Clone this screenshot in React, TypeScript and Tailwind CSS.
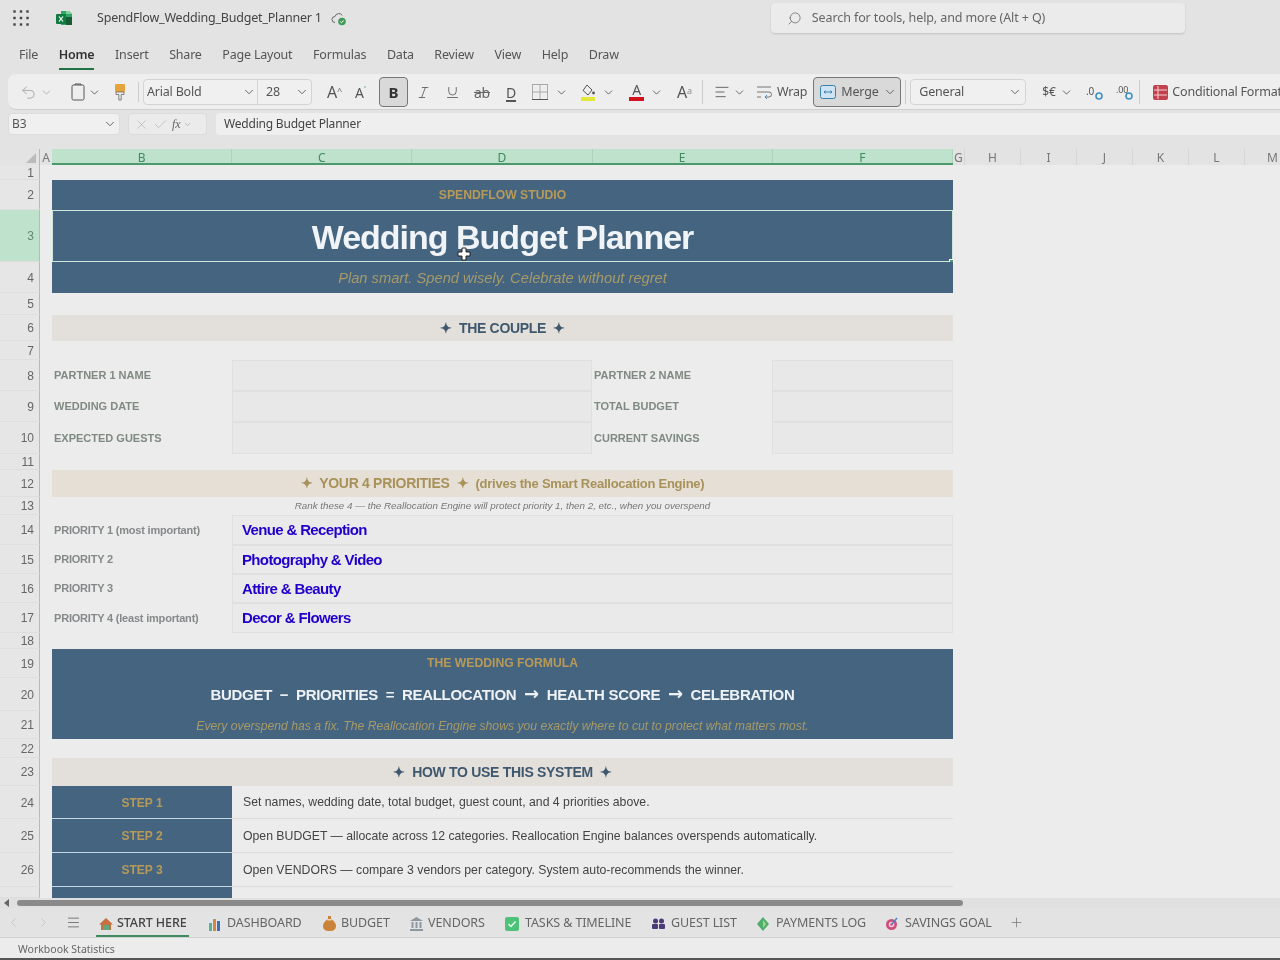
import type { ReactNode } from 'react'
import { ChevronDown, Undo2, Italic, Underline, Search, X, Check, ChevronLeft, ChevronRight, Menu, Plus, AlignLeft } from 'lucide-react'

const COLS = [
  { l: 'G', w: 12 }, { l: 'H', w: 56 }, { l: 'I', w: 56 }, { l: 'J', w: 56 }, { l: 'K', w: 56 }, { l: 'L', w: 56 }, { l: 'M', w: 56 },
]

function Chev({ className = 'ml-1' }: { className?: string }) {
  return <ChevronDown size={14} strokeWidth={1.5} className={`text-[#555] shrink-0 ${className}`} />
}

function ExcelLogo() {
  return (
    <svg width="20" height="20" viewBox="0 0 20 20">
      <path d="M7 3h8l3 3v11H7z" fill="#2fa866" />
      <path d="M12 3h3l3 3h-6z" fill="#7fd09c" />
      <rect x="12" y="9" width="6" height="8" fill="#185c37" />
      <rect x="2" y="6" width="10" height="10" rx="1" fill="#107c41" />
      <path d="M5 8.5l4 5M9 8.5l-4 5" stroke="#fff" strokeWidth="1.2" />
    </svg>
  )
}

function Waffle() {
  return (
    <svg width="16" height="16" viewBox="0 0 16 16" fill="#444">
      {[1.5, 8, 14.5].flatMap(y => [1.5, 8, 14.5].map(x => <rect key={`${x}${y}`} x={x - 1.2} y={y - 1.2} width="2.4" height="2.4" />))}
    </svg>
  )
}

function CloudOk() {
  return (
    <svg width="17" height="17" viewBox="0 0 17 17" fill="none">
      <path d="M4 12.5a3 3 0 0 1 0-6 4 4 0 0 1 7.3-1" stroke="#666" strokeWidth="1" />
      <circle cx="11" cy="11.5" r="3.8" fill="#3f9a5a" />
      <path d="M9.2 11.5l1.3 1.3 2.2-2.4" stroke="#fff" strokeWidth="1" />
    </svg>
  )
}

function RibbonIcons() {
  return (
    <div className="flex items-center h-full w-max pt-[1px] [&>*]:shrink-0">
      <Undo2 size={17} strokeWidth={1.4} className="ml-[12px] text-[#aaa]" />
      <ChevronDown size={13} strokeWidth={1.5} className="ml-[3px] text-[#aaa]" />
      <svg width="14" height="18" viewBox="0 0 14 18" fill="none" stroke="#555" className="ml-[18px]">
        <rect x="1" y="2" width="12" height="15" rx="1.5" /><path d="M4 2V1h6v1" />
      </svg>
      <ChevronDown size={13} strokeWidth={1.6} className="ml-[3px] text-[#555]" />
      <svg width="14" height="18" viewBox="0 0 14 18" className="ml-[12px]">
        <rect x="2" y="1" width="10" height="8" rx="1" fill="#e4a33c" />
        <path d="M3 9h8v2.5H8.2V17H5.8v-5.5H3z" fill="#eee" stroke="#666" strokeWidth="0.8" />
      </svg>
      <div className="w-px h-5 bg-[#ccc] ml-[11px]" />
      <div className="flex items-center h-[26px] ml-[4px] w-[169px] bg-[#f0f0f0] border border-[#d4d4d4] rounded">
        <div className="w-[114px] h-full flex items-center justify-between pl-[3px] pr-[1px] border-r border-[#d4d4d4]">
          <span>Arial Bold</span><Chev />
        </div>
        <div className="flex-1 flex items-center justify-between pl-[8px] pr-[2px]">
          <span>28</span><Chev />
        </div>
      </div>
      <span className="ml-[15px] w-[22px] text-[16px] text-[#555] whitespace-nowrap">A<sup className="text-[9px] text-[#666]">^</sup></span>
      <span className="ml-[6px] w-[20px] text-[14px] text-[#555] whitespace-nowrap">A<sup className="text-[9px] text-[#3f9a5a]">˅</sup></span>
      <div className="ml-[4px] w-[29px] h-[30px] bg-[#d9d9d9] border border-[#777] rounded flex items-center justify-center text-[15px] font-bold text-[#333]">B</div>
      <Italic size={15} strokeWidth={1.3} className="ml-[8px] text-[#555]" />
      <Underline size={15} strokeWidth={1.3} className="ml-[14px] text-[#555]" />
      <span className="ml-[13px] w-[18px] text-center text-[14px] text-[#666] line-through">ab</span>
      <span className="ml-[15px] w-[14px] text-[14px] text-[#555] underline decoration-2 underline-offset-2">D</span>
      <svg width="16" height="16" viewBox="0 0 16 16" fill="none" stroke="#aaa" className="ml-[12px]">
        <rect x="0.5" y="0.5" width="15" height="15" /><path d="M8 0v16M0 8h16" />
        <path d="M0 15.5h16" stroke="#555" />
      </svg>
      <ChevronDown size={13} strokeWidth={1.6} className="ml-[7px] text-[#555]" />
      <svg width="16" height="19" viewBox="0 0 16 19" className="ml-[12px]">
        <path d="M7 2l5 5-4 5-5-4.5z" fill="none" stroke="#555" />
        <circle cx="13.5" cy="10" r="1.4" fill="#555" />
        <rect x="1" y="14" width="14" height="4" fill="#e5e63a" />
      </svg>
      <ChevronDown size={13} strokeWidth={1.6} className="ml-[6px] text-[#555]" />
      <div className="ml-[14px] w-[15px] flex flex-col items-center">
        <span className="text-[14px] leading-[14px] text-[#555]">A</span>
        <span className="w-full h-[4px] bg-[#d3121f]" />
      </div>
      <ChevronDown size={13} strokeWidth={1.6} className="ml-[6px] text-[#555]" />
      <span className="ml-[14px] w-[18px] text-[16px] text-[#555] whitespace-nowrap">A<sup className="text-[9px] text-[#888]">a</sup></span>
      <div className="w-px h-6 bg-[#ccc] ml-[7px]" />
      <AlignLeft size={16} strokeWidth={1.3} className="ml-[11px] text-[#555]" />
      <ChevronDown size={13} strokeWidth={1.6} className="ml-[3px] text-[#555]" />
      <svg width="16" height="14" viewBox="0 0 16 14" fill="none" stroke="#777" className="ml-[10px]">
        <path d="M1 2h14M1 7h12a2.500 2.500 0 0 1 0 5H9M1 12h4" /><path d="M11 10l-2 2 2 2" stroke="#3d8fc4" />
      </svg>
      <span className="ml-[5px]">Wrap</span>
      <div className="ml-[6px] w-[88px] h-[30px] bg-[#d9d9d9] border border-[#777] rounded flex items-center pl-[6px]">
        <svg width="16" height="14" viewBox="0 0 16 14" fill="#cfe4f2" stroke="#3a82ad"><rect x="0.5" y="0.5" width="15" height="13" rx="2" /><path d="M4 7h8M5.500 5.500L4 7l1.500 1.500M10.500 5.500L12 7l-1.500 1.500" /></svg>
        <span className="ml-[5px]">Merge</span>
        <Chev />
      </div>
      <div className="w-px h-6 bg-[#ccc] ml-[4px]" />
      <div className="ml-[4px] w-[116px] h-[26px] bg-[#f0f0f0] border border-[#d4d4d4] rounded flex items-center justify-between pl-[8px] pr-[3px]">
        <span>General</span><Chev />
      </div>
      <span className="ml-[16px] w-[15px] text-[12px] text-[#555] whitespace-nowrap">$€</span>
      <ChevronDown size={13} strokeWidth={1.6} className="ml-[3px] text-[#555]" />
      <svg width="18" height="17" viewBox="0 0 18 17" className="ml-[13px]">
        <text x="0" y="11" fontSize="10" fill="#555">.0</text><circle cx="13" cy="12" r="3" fill="none" stroke="#3d8fc4" strokeWidth="1.6" />
      </svg>
      <svg width="18" height="17" viewBox="0 0 18 17" className="ml-[12px]">
        <text x="0" y="9" fontSize="9" fill="#555">.00</text><circle cx="13" cy="12" r="3" fill="none" stroke="#3d8fc4" strokeWidth="1.6" />
      </svg>
      <div className="w-px h-6 bg-[#ccc] ml-[5px]" />
      <svg width="15" height="15" viewBox="0 0 15 15" className="ml-[13px]">
        <rect width="15" height="15" rx="2" fill="#c3414f" /><path d="M1 5h13M1 10h13M5 1v13" stroke="#f3d4d4" />
      </svg>
      <span className="ml-[4px] whitespace-nowrap">Conditional Formatting</span>
    </div>
  )
}

function Row({ n, h, selected, children }: { n?: number; h: number; selected?: boolean; children?: ReactNode }) {
  return (
    <div className="flex shrink-0" style={{ height: h }}>
      <div className={`w-[40px] shrink-0 flex items-center justify-end pr-[5px] pt-[1px] text-[12px] border-r border-[#b9b9b9] border-b border-b-[#dedede] ${selected ? 'bg-[#bfe2cc] text-[#5e8a70]' : 'bg-[#e6e6e6] text-[#666]'}`}>{n}</div>
      <div className="w-[12px] shrink-0" />
      <div className="w-[901px] shrink-0 flex relative">{children}</div>
    </div>
  )
}

function Banner({ children }: { children?: ReactNode }) {
  return <div className="w-full h-full bg-[#456480] flex items-center justify-center">{children}</div>
}

function Section({ tan, children }: { tan?: boolean; children: ReactNode }) {
  return <div className={`w-full h-full flex items-center justify-center text-[14px] font-bold tracking-[-0.3px] ${tan ? 'bg-[#e5dfd6] text-[#a8925a]' : 'bg-[#e3dfda] text-[#3f586e]'}`}>{children}</div>
}

function Label({ w = 180, children }: { w?: number; children: string }) {
  return <div className="shrink-0 flex items-center pl-[2px] text-[11px] font-bold text-[#7f8a82]" style={{ width: w }}>{children}</div>
}

function Blank({ w }: { w: number }) {
  return <div className="shrink-0 bg-[#e8e8e8] border border-[#e0e0e0]" style={{ width: w }} />
}

function Step({ n, h, step, text }: { n: number; h: number; step: string; text: string }) {
  return (
    <Row n={n} h={h}>
      <div className="w-[180px] shrink-0 bg-[#456480] border-b border-[#c4d6e2] flex items-center justify-center pt-[1px] text-[12px] font-bold text-[#b79a58]">{step}</div>
      <div className="flex-1 flex items-center pl-[11px] pt-[1px] text-[12.25px] text-[#444] border-b border-[#dcdcdc]">{text}</div>
    </Row>
  )
}

function Priority({ n, h, label, value }: { n: number; h: number; label: string; value: string }) {
  return (
    <Row n={n} h={h}>
      <div className="w-[180px] shrink-0 flex items-center pl-[2px] text-[11px] font-bold text-[#85898a] tracking-[-0.2px]">{label}</div>
      <div className="flex-1 flex items-center pl-[9px] pt-[1px] text-[15px] font-bold tracking-[-0.65px] text-[#2200cc] bg-[#eaeaea] border border-[#e0e0e0]">{value}</div>
    </Row>
  )
}

const TABS: { label: string; icon: ReactNode; slot: number; width: number; gap: number }[] = [
  {
    label: 'DASHBOARD', slot: 19, width: 75, gap: 21,
    icon: <svg width="13" height="14" viewBox="0 0 13 14"><rect width="13" height="14" fill="#dfe6ea" /><rect x="1" y="6" width="3" height="8" fill="#5fb08a" /><rect x="5" y="2" width="3" height="12" fill="#d9843f" /><rect x="9" y="4" width="3" height="10" fill="#3f6fb0" /></svg>,
  },
  {
    label: 'BUDGET', slot: 18, width: 48, gap: 21,
    icon: <svg width="13" height="15" viewBox="0 0 13 15"><path d="M5 0h3v3c3 2 5 4 5 7s-2 5-6.500 5S0 13 0 10s2-5 5-7z" fill="#c9833a" /><rect x="4.500" y="3" width="4" height="1.500" fill="#f0d9a8" /></svg>,
  },
  {
    label: 'VENDORS', slot: 18, width: 57, gap: 20,
    icon: <svg width="13" height="14" viewBox="0 0 13 14" fill="#8d97a0"><path d="M6.500 0L13 4H0z" /><rect x="1.500" y="5" width="2" height="6" /><rect x="5.500" y="5" width="2" height="6" /><rect x="9.500" y="5" width="2" height="6" /><rect y="12" width="13" height="2" /></svg>,
  },
  {
    label: 'TASKS & TIMELINE', slot: 20, width: 107, gap: 20,
    icon: <svg width="14" height="14" viewBox="0 0 14 14"><rect width="14" height="14" rx="2" fill="#4fc27a" /><path d="M3.500 7l2.500 2.500 4.500-5" stroke="#e8f8ee" strokeWidth="1.500" fill="none" /></svg>,
  },
  {
    label: 'GUEST LIST', slot: 19, width: 64, gap: 22,
    icon: <svg width="13" height="11" viewBox="0 0 13 11" fill="#4a3a78"><circle cx="3.500" cy="3" r="2.500" /><circle cx="9.500" cy="3" r="2.500" /><rect y="6" width="6" height="5" rx="1" /><rect x="7" y="6" width="6" height="5" rx="1" /></svg>,
  },
  {
    label: 'PAYMENTS LOG', slot: 19, width: 89, gap: 20,
    icon: <svg width="12" height="14" viewBox="0 0 12 14"><path d="M6 0l6 7-6 7-6-7z" fill="#4fae6a" /><path d="M6 3l3 4-3 4" fill="#a5d58a" /></svg>,
  },
  {
    label: 'SAVINGS GOAL', slot: 20, width: 88, gap: 0,
    icon: <svg width="14" height="15" viewBox="0 0 14 15" fill="none"><circle cx="6.500" cy="8.500" r="5.500" fill="#cf4d7c" /><circle cx="6.500" cy="8.500" r="2.800" fill="#f0d3df" /><circle cx="6.500" cy="8.500" r="1.300" fill="#cf4d7c" /><path d="M7 8l5-6" stroke="#4a86c4" strokeWidth="1.500" /></svg>,
  },
]

export default function App() {
  return (
    <div className="w-[1280px] h-[960px] overflow-hidden flex flex-col relative bg-[#e3e3e3] text-[13px] text-[#555] blur-[0.5px] font-['Noto_Sans','Open_Sans',sans-serif]">
      {/* title bar */}
      <div className="h-[36px] shrink-0 flex items-center">
        <div className="ml-[13px]"><Waffle /></div>
        <div className="ml-[25px]"><ExcelLogo /></div>
        <span className="ml-[23px] text-[12.5px] text-[#444] tracking-[-0.2px]">SpendFlow_Wedding_Budget_Planner 1</span>
        <div className="ml-[9px]"><CloudOk /></div>
        <div className="ml-[423px] w-[414px] h-[30px] bg-[#ebebeb] rounded-sm shadow-[0_1px_2px_rgba(0,0,0,0.15)] flex items-center pl-[16px]">
          <Search size={15} strokeWidth={1.2} className="text-[#666] -scale-x-100" />
          <span className="ml-[10px] text-[12.5px] text-[#666] tracking-[-0.1px]">Search for tools, help, and more (Alt + Q)</span>
        </div>
      </div>

      {/* menu */}
      <div className="h-[38px] shrink-0 flex items-center pl-[19px] gap-[20.6px] text-[12.5px] tracking-[-0.2px]">
        <span>File</span>
        <span className="relative font-semibold text-[#333]">Home<span className="absolute left-0 right-0 -bottom-[6px] h-[2px] bg-[#217346]" /></span>
        {['Insert', 'Share', 'Page Layout', 'Formulas', 'Data', 'Review', 'View', 'Help', 'Draw'].map(m => <span key={m}>{m}</span>)}
      </div>

      {/* ribbon */}
      <div className="h-[36px] shrink-0 ml-[8px] bg-[#eeeeee] rounded-l-lg border-b border-[#cfcfcf] text-[12.5px] tracking-[-0.2px] overflow-hidden">
        <RibbonIcons />
      </div>

      {/* formula bar */}
      <div className="h-[22px] mt-[3px] shrink-0 flex text-[12px]">
        <div className="ml-[8px] w-[112px] bg-[#f0f0f0] border border-[#dcdcdc] rounded-sm flex items-center justify-between pl-[3px] pr-[2px]"><span>B3</span><Chev /></div>
        <div className="ml-[8px] w-[79px] bg-[#ebebeb] border border-[#dcdcdc] rounded-sm flex items-center pl-[5px] text-[#aaa]">
          <X size={15} strokeWidth={1} /><Check size={15} strokeWidth={1} className="ml-[4px]" />
          <span className="ml-[4px] italic font-['Liberation_Serif',serif] text-[#666]">fx</span>
          <ChevronDown size={9} className="ml-[2px]" />
        </div>
        <div className="ml-[9px] flex-1 bg-[#efefef] rounded-l-sm flex items-center pl-[8px] text-[#444] tracking-[-0.2px]">Wedding Budget Planner</div>
      </div>

      {/* column headers */}
      <div className="h-[16px] mt-[14px] shrink-0 flex text-[12px] leading-[18px] text-[#777]">
        <div className="w-[40px] shrink-0 flex items-end justify-end pr-[3px] pb-[2px] border-r border-[#b9b9b9]">
          <svg width="10" height="10" viewBox="0 0 10 10"><path d="M10 0v10H0z" fill="#bbb" /></svg>
        </div>
        <div className="w-[12px] shrink-0 text-center">A</div>
        <div className="flex bg-[#bfe2cc] border-b-2 border-[#4c9a6c] text-[#3f8a5f]">
          {['B', 'C', 'D', 'E', 'F'].map(c => <div key={c} className="w-[180.2px] text-center border-r border-[#aed6bc]">{c}</div>)}
        </div>
        {COLS.map(c => <div key={c.l} className="shrink-0 text-center border-r border-[#d6d6d6]" style={{ width: c.w }}>{c.l}</div>)}
      </div>

      {/* sheet */}
      <div className="h-[733px] shrink-0 overflow-hidden flex flex-col bg-[#ececec] font-['Liberation_Sans',Arial,sans-serif]">
        <Row n={1} h={15} />
        <Row n={2} h={30}><Banner><span className="text-[12.2px] font-bold text-[#b79a58]">SPENDFLOW STUDIO</span></Banner></Row>
        <Row n={3} h={52} selected>
          <div className="w-full h-full bg-[#456480] flex items-center justify-center pt-[2px] text-[34px] font-bold tracking-[-1px] text-[#f0f4f7] border border-[#cfe7da]">Wedding Budget Planner</div>
          <div className="absolute -right-[1px] -bottom-[2px] w-[5px] h-[5px] bg-[#4c9a6c] border border-white" />
        </Row>
        <Row n={4} h={31}><Banner><span className="mt-[2px] text-[14.7px] italic text-[#a69a68]">Plan smart. Spend wisely. Celebrate without regret</span></Banner></Row>
        <Row n={5} h={22} />
        <Row n={6} h={26}><Section>✦&nbsp; THE COUPLE &nbsp;✦</Section></Row>
        <Row n={7} h={19} />
        <Row n={8} h={31}><Label>PARTNER 1 NAME</Label><Blank w={360} /><Label>PARTNER 2 NAME</Label><Blank w={181} /></Row>
        <Row n={9} h={31}><Label>WEDDING DATE</Label><Blank w={360} /><Label>TOTAL BUDGET</Label><Blank w={181} /></Row>
        <Row n={10} h={32}><Label>EXPECTED GUESTS</Label><Blank w={360} /><Label>CURRENT SAVINGS</Label><Blank w={181} /></Row>
        <Row n={11} h={16} />
        <Row n={12} h={27}><Section tan>✦&nbsp; YOUR 4 PRIORITIES &nbsp;✦&nbsp;&nbsp;<span className="text-[13px] tracking-[-0.25px]">(drives the Smart Reallocation Engine)</span></Section></Row>
        <Row n={13} h={18}>
          <div className="w-full flex items-center justify-center text-[9.8px] italic text-[#777]">Rank these 4 — the Reallocation Engine will protect priority 1, then 2, etc., when you overspend</div>
        </Row>
        <Priority n={14} h={30} label="PRIORITY 1 (most important)" value="Venue & Reception" />
        <Priority n={15} h={29} label="PRIORITY 2" value="Photography & Video" />
        <Priority n={16} h={29} label="PRIORITY 3" value="Attire & Beauty" />
        <Priority n={17} h={30} label="PRIORITY 4 (least important)" value="Decor & Flowers" />
        <Row n={18} h={16} />
        <Row n={19} h={29}><Banner><span className="text-[12.2px] font-bold text-[#b79a58]">THE WEDDING FORMULA</span></Banner></Row>
        <Row n={20} h={33}>
          <Banner>
            <span className="mt-[2px] text-[15px] font-bold tracking-[-0.3px] text-[#eef2f5] whitespace-pre">
              BUDGET  −  PRIORITIES  =  REALLOCATION  <span className="font-['DejaVu_Sans'] text-[18px] leading-none">→</span>  HEALTH SCORE  <span className="font-['DejaVu_Sans'] text-[18px] leading-none">→</span>  CELEBRATION
            </span>
          </Banner>
        </Row>
        <Row n={21} h={28}><Banner><span className="mt-[2px] text-[12.2px] italic text-[#a69a68]">Every overspend has a fix. The Reallocation Engine shows you exactly where to cut to protect what matters most.</span></Banner></Row>
        <Row n={22} h={19} />
        <Row n={23} h={28}><Section>✦&nbsp; HOW TO USE THIS SYSTEM &nbsp;✦</Section></Row>
        <Step n={24} h={33} step="STEP 1" text="Set names, wedding date, total budget, guest count, and 4 priorities above." />
        <Step n={25} h={34} step="STEP 2" text="Open BUDGET — allocate across 12 categories. Reallocation Engine balances overspends automatically." />
        <Step n={26} h={34} step="STEP 3" text="Open VENDORS — compare 3 vendors per category. System auto-recommends the winner." />
        <Row h={11}><div className="w-[180px] bg-[#456480]" /></Row>
      </div>

      {/* scrollbar */}
      <div className="h-[10px] shrink-0 flex items-center bg-[#e0e0e0]">
        <span className="ml-[4px] w-0 h-0 border-y-[4px] border-y-transparent border-r-[5px] border-r-[#666]" />
        <div className="ml-[8px] w-[946px] h-[6px] rounded-full bg-[#8a8a8a]" />
      </div>

      {/* sheet tabs */}
      <div className="h-[30px] shrink-0 flex items-center border-b border-[#d0d0d0] text-[12.5px] tracking-[-0.1px]">
        <ChevronLeft size={15} strokeWidth={1.2} className="ml-[6px] text-[#bbb]" />
        <ChevronRight size={15} strokeWidth={1.2} className="ml-[15px] text-[#bbb]" />
        <Menu size={15} strokeWidth={1.2} className="ml-[15px] text-[#555]" />
        <div className="ml-[15px] h-full flex items-center relative pl-[3px] pt-[2px]">
          <svg width="14" height="14" viewBox="0 0 14 14"><path d="M7 1L0 7.500h2V13h10V7.500h2z" fill="#c8703f" /><rect x="4" y="8" width="6" height="5" fill="#5fa87a" /></svg>
          <span className="ml-[4px] w-[72px] font-medium text-[#444] whitespace-nowrap">START HERE</span>
          <span className="absolute left-0 right-0 bottom-0 h-[2px] bg-[#3f8a5f]" />
        </div>
        <div className="ml-[19px] flex items-center pt-[2px]">
          {TABS.map(t => (
            <div key={t.label} className="flex items-center" style={{ marginRight: t.gap }}>
              <div className="shrink-0" style={{ width: t.slot }}>{t.icon}</div>
              <span className="text-[#666] whitespace-nowrap" style={{ width: t.width }}>{t.label}</span>
            </div>
          ))}
        </div>
        <Plus size={15} strokeWidth={1.2} className="ml-[16px] text-[#777]" />
      </div>

      {/* status bar */}
      <div className="flex-1 bg-[#ececec] border-b-2 border-[#555] flex items-center pl-[18px] pt-[3px] text-[10.5px] text-[#666]">Workbook Statistics</div>

      {/* pointer over the selected cell */}
      <svg width="14" height="14" viewBox="0 0 14 14" className="absolute left-[457px] top-[247px]">
        <path d="M5 1h4v4h4v4H9v4H5V9H1V5h4z" fill="#fff" stroke="#222" />
      </svg>
    </div>
  )
}
